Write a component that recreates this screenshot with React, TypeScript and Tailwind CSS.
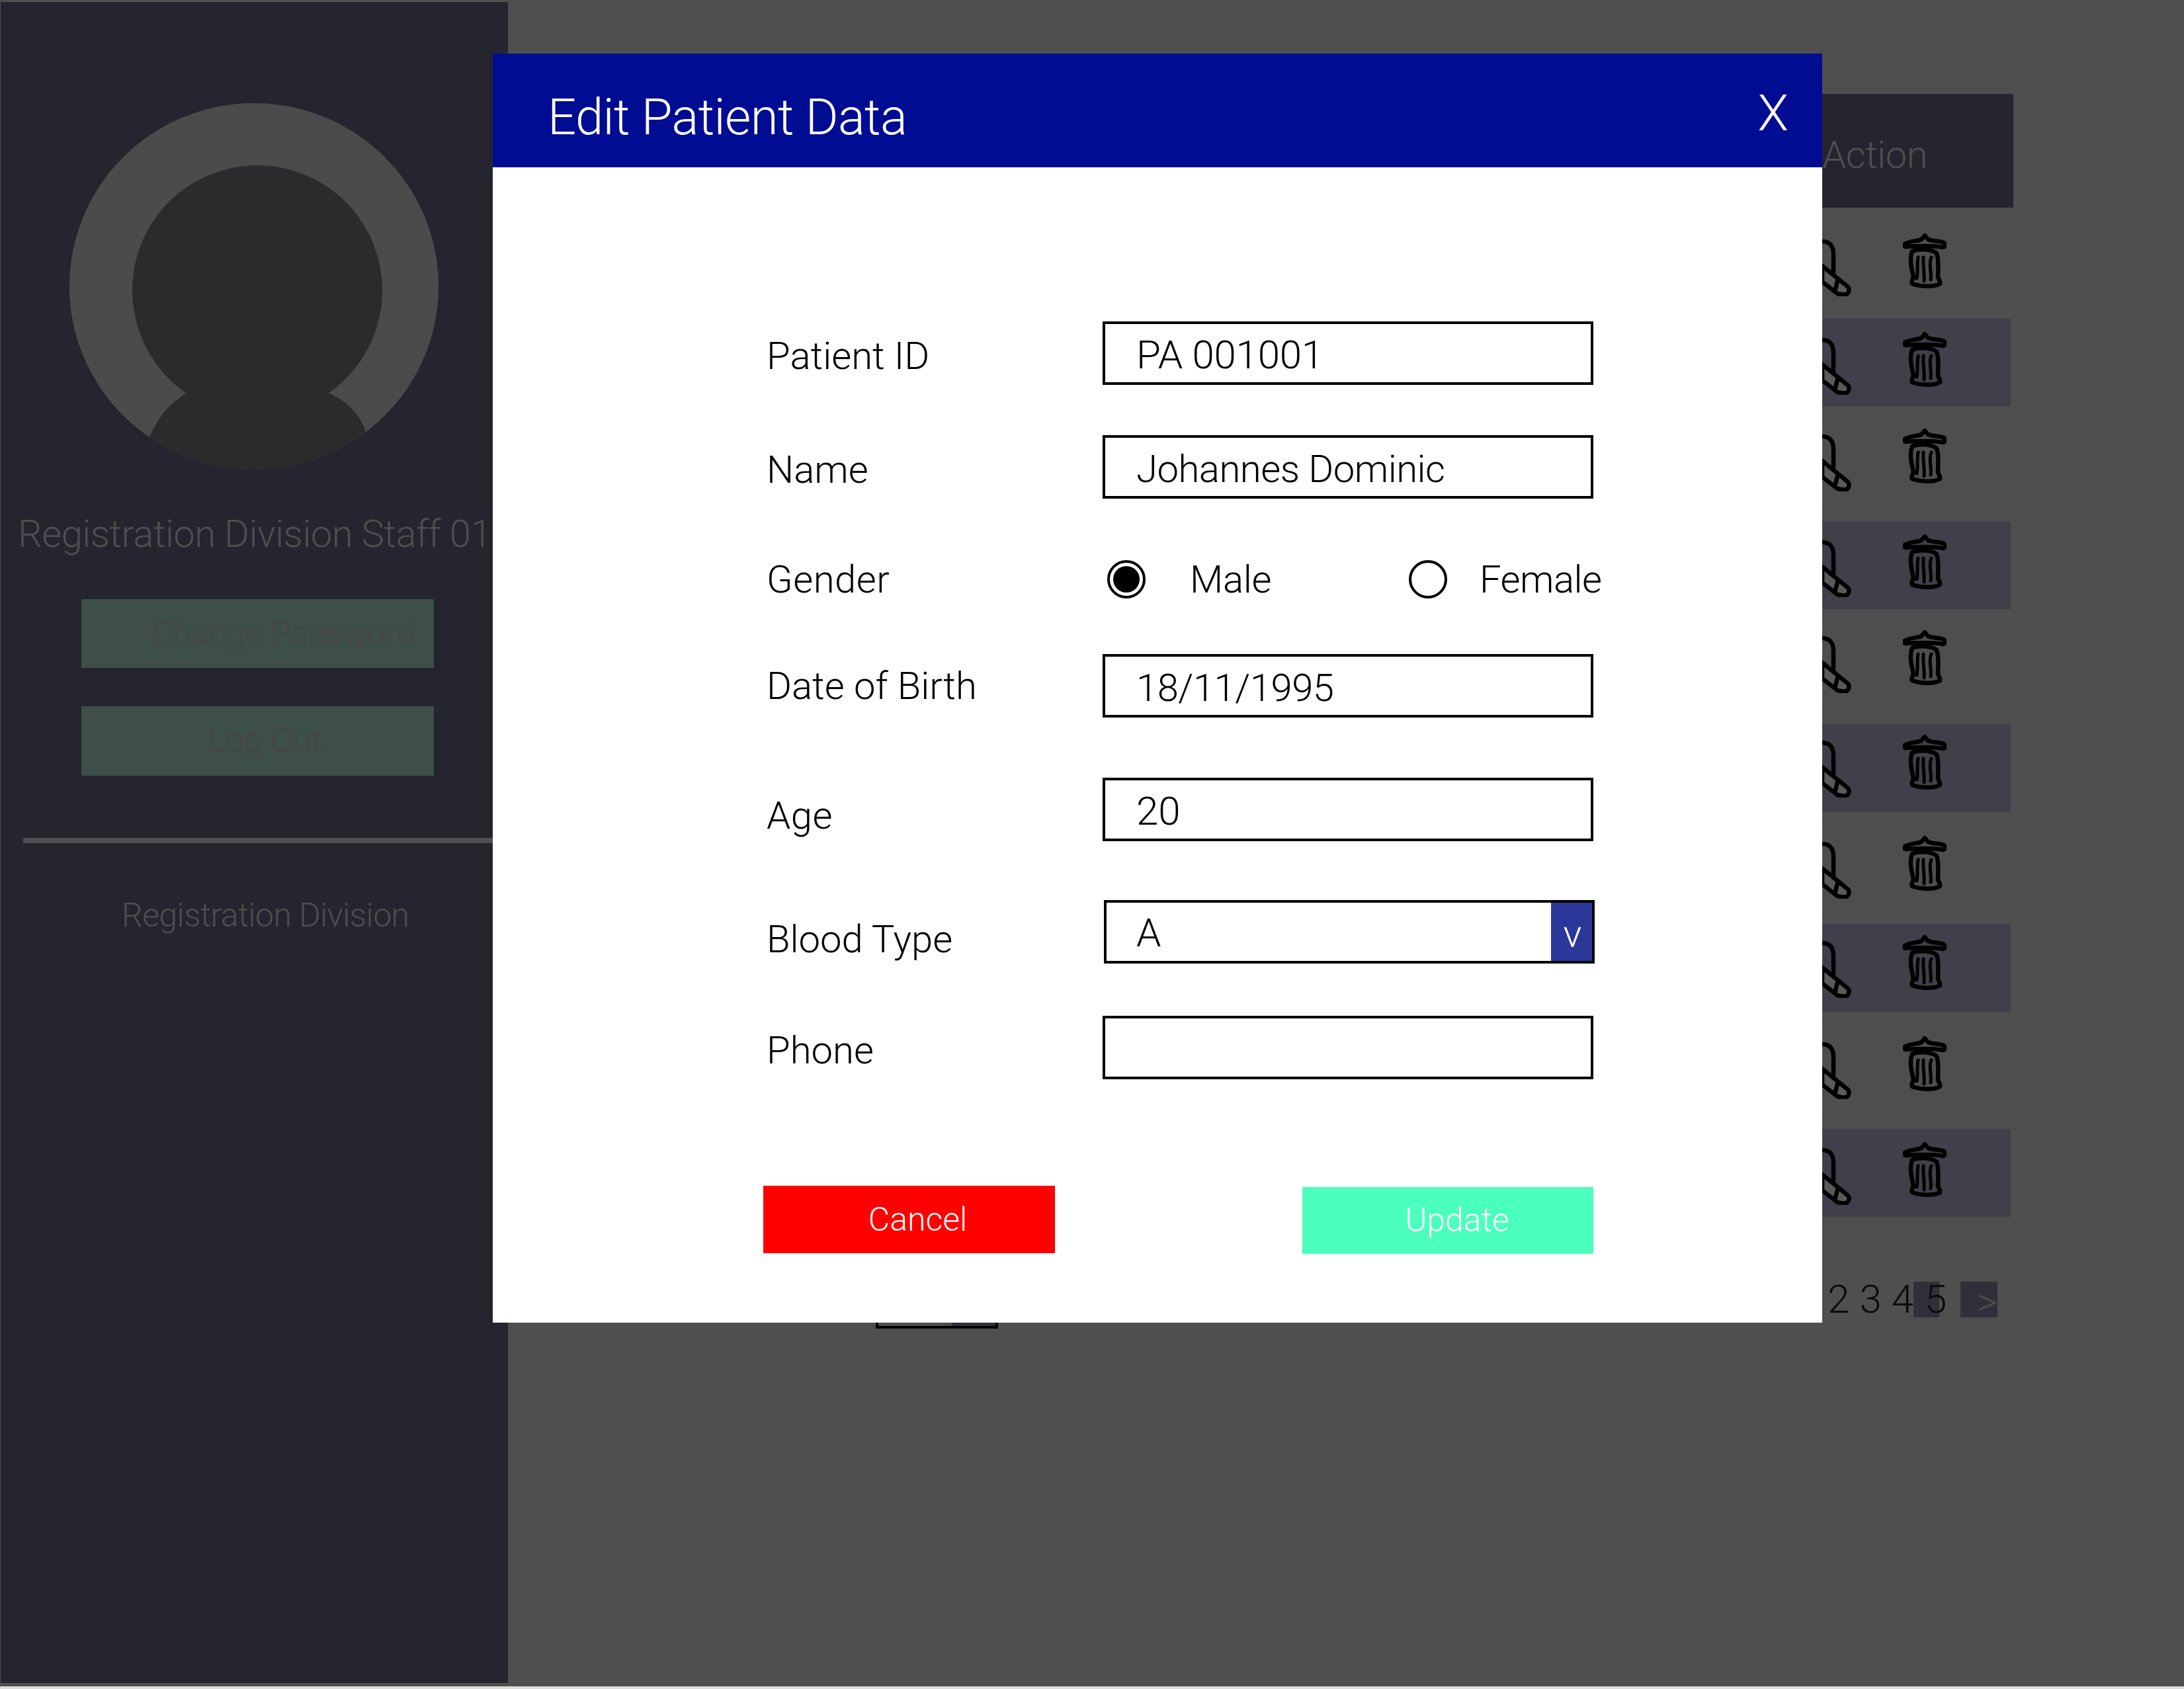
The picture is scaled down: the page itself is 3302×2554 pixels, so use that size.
import { useId } from 'react';

const sans = "font-['Roboto','Liberation_Sans',Arial,sans-serif] font-light";

// background table rows, mostly hidden by the dialog
const rows = [
    { box: 'mt-[16px] h-[130px] pt-[25px]', bg: 'bg-[#4e4e4e]' },
    { box: 'mt-[22px] h-[133px] pt-[22px]', bg: 'bg-[#40404b]' },
    { box: 'mt-[20px] h-[130px] pt-[15px]', bg: 'bg-[#4e4e4e]' },
    { box: 'mt-[23px] h-[133px] pt-[22px]', bg: 'bg-[#40404b]' },
    { box: 'mt-[20px] h-[130px] pt-[14px]', bg: 'bg-[#4e4e4e]' },
    { box: 'mt-[23px] h-[134px] pt-[19px]', bg: 'bg-[#40404b]' },
    { box: 'mt-[19px] h-[130px] pt-[19px]', bg: 'bg-[#4e4e4e]' },
    { box: 'mt-[20px] h-[133px] pt-[19px]', bg: 'bg-[#40404b]' },
    { box: 'mt-[20px] h-[130px] pt-[19px]', bg: 'bg-[#4e4e4e]' },
    { box: 'mt-[27px] h-[133px] pt-[22px]', bg: 'bg-[#40404b]' },
];

function Avatar() {
    const id = useId();
    return (
        <svg width="560" height="554" viewBox="0 0 560 554" className="ml-[104px] mt-[153px] block">
            <defs>
                <clipPath id={id}>
                    <ellipse cx="279" cy="277" rx="279" ry="277" />
                </clipPath>
            </defs>
            <ellipse cx="279" cy="277" rx="279" ry="277" fill="#4b4b4b" />
            <g clipPath={`url(#${id})`} fill="#2a2b2c">
                <circle cx="284" cy="283" r="189" />
                <path d="M181 436 C150 454 134 476 122 503 L100 558 L470 558 L447 495 C438 466 416 450 388 436 Z" />
            </g>
        </svg>
    );
}

function Sidebar() {
    return (
        <aside className="ml-[1px] mt-[3px] h-[2542px] w-[767px] shrink-0 bg-[#252530]">
            <Avatar />
            <p className="mt-[60px] pl-[26px] text-[58px] leading-[74px] tracking-[-0.6px] whitespace-nowrap text-[#4e4e4e]">Registration Division Staff 01</p>
            <div className="ml-[122px] mt-[62px] flex h-[104px] w-[533px] items-center bg-[#3d4f48] pl-[106px] text-[50px] text-[#464549]">Change Password</div>
            <div className="ml-[122px] mt-[58px] flex h-[105px] w-[533px] items-center bg-[#3d4f48] pl-[190px] text-[50px] tracking-[0.5px] text-[#464549]">Log Out</div>
            <div className="ml-[34px] mt-[94px] h-[8px] w-[720px] bg-[#4f4f4f]" />
            <p className="mt-[79px] pl-[183px] text-[50px] leading-[60px] tracking-[-0.6px] whitespace-nowrap text-[#4e4e4e]">Registration Division</p>
        </aside>
    );
}

function TrashIcon() {
    return (
        <svg width="66" height="84" viewBox="0 0 66 84" fill="none" stroke="#000" strokeWidth="6.5" strokeLinecap="round" strokeLinejoin="round" className="mt-[-2px] shrink-0">
            <path d="M3 16 C10 11 22 12 28 9 L33 3 L38 9 C45 12 56 11 62 14 C65 17 64 20 61 21 C45 18 20 19 4 20 C1 19 1 17 3 16 Z" />
            <path d="M14 27 C24 22 44 24 51 30 C55 40 53 56 53 66 C54 70 57 72 56 76 C48 81 28 81 14 76 C12 72 15 70 16 66 C14 56 9 40 14 27 Z" />
            <path d="M23 36 C21 46 23 58 21 68 M31 36 C30 48 33 60 32 72 M43 36 C38 46 44 58 42 70" strokeWidth="5" />
        </svg>
    );
}

function SearchIcon() {
    return (
        <svg width="60" height="90" viewBox="0 0 60 90" fill="none" stroke="#000" strokeWidth="6.5" strokeLinecap="round" strokeLinejoin="round" className="mt-[3px] shrink-0">
            <path d="M0 7 L15 7 C28 7 32 16 32 26 L32 54" />
            <path d="M0 40 L15 44 L53 75 C57 78 56 84 52 87 C48 88 42 87 38 86 L15 68 L0 66 Z" fill="#5a5a5a" />
            <path d="M38 67 L35 79" />
            <path d="M0 46 L15 46 L15 66 L0 66 Z" fill="#000" />
        </svg>
    );
}

function BackgroundPage() {
    return (
        <main className="min-w-0 flex-1 pt-[142px]">
            <div className="ml-auto mr-[258px] w-[700px]">
                <div className="flex h-[172px] items-center bg-[#252530] pl-[411px] text-[58px] tracking-[-0.5px] text-[#4f4f4f]">
                    <span className="mt-[12px]">Action</span>
                </div>
                {rows.map((r, i) => (
                    <div key={i} className={`mr-[4px] flex items-start justify-end gap-[77px] pr-[97px] ${r.box} ${r.bg}`}>
                        <SearchIcon />
                        <TrashIcon />
                    </div>
                ))}
            </div>
            <div className="mt-[98px] flex items-start">
                <div className="ml-[556px] flex h-[71px] w-[185px] border-4 border-black bg-[#4f4f4f]">
                    <div className="ml-auto h-full w-[66px] bg-[#30303a]" />
                </div>
                <div className="ml-auto mr-[282px] flex h-[54px] items-center text-[60px] leading-none text-[#0c0c0c]">
                    <span className="mr-[-15px] tracking-[15px]">234</span>
                    <span className="flex h-[54px] w-[39px] items-center bg-[#30303a] pl-[17px]">5</span>
                    <span className="ml-[32px] flex h-[54px] w-[56px] items-center justify-end bg-[#30303a] pt-[8px] text-[#4f4f4f]">&gt;</span>
                </div>
            </div>
        </main>
    );
}

function Label({ children, className = '' }: { children: string; className?: string }) {
    return <label className={`w-[507px] shrink-0 text-[58px] leading-none text-black ${className}`}>{children}</label>;
}

function TextBox({ value, className = 'text-[58px] tracking-[-0.5px]' }: { value?: string; className?: string }) {
    return (
        <div className={`flex h-[96px] w-[742px] items-center border-4 border-black bg-white pl-[47px] pt-[6px] text-black ${className}`}>{value}</div>
    );
}

function Radio({ checked, className = '' }: { checked?: boolean; className?: string }) {
    return (
        <span className={`flex h-[58px] w-[58px] shrink-0 items-center justify-center rounded-full border-4 border-black ${className}`}>
            {checked && <span className="h-[40px] w-[40px] rounded-full bg-black" />}
        </span>
    );
}

function EditDialog() {
    return (
        <section className="absolute left-[745px] top-[81px] h-[1919px] w-[2010px] bg-white">
            <header className="flex h-[172px] items-center justify-between bg-[#000c92] pl-[83px] pr-[51px] text-white">
                <h1 className="mt-[20px] text-[76px] font-light tracking-[-0.6px]">Edit Patient Data</h1>
                <span className="mt-[8px] text-[76px] font-light">X</span>
            </header>
            <form className="pl-[414px]">
                <div className="mt-[233px] flex items-center">
                    <Label className="mt-[8px]">Patient ID</Label>
                    <div className="ml-[1px]"><TextBox value="PA 001001" className="text-[60px] tracking-[-0.2px]" /></div>
                </div>
                <div className="mt-[76px] flex items-center">
                    <Label className="mt-[8px]">Name</Label>
                    <div className="ml-[1px]"><TextBox value="Johannes Dominic" /></div>
                </div>
                <div className="mt-[93px] flex h-[58px] items-center">
                    <Label className="tracking-[0.5px]">Gender</Label>
                    <Radio checked className="ml-[8px]" />
                    <span className="ml-[67px] w-[331px] text-[58px] tracking-[-0.3px] text-black">Male</span>
                    <Radio />
                    <span className="ml-[49px] text-[58px] tracking-[-0.5px] text-black">Female</span>
                </div>
                <div className="mt-[84px] flex items-center">
                    <Label>Date of Birth</Label>
                    <div className="ml-[1px]"><TextBox value="18/11/1995" /></div>
                </div>
                <div className="mt-[91px] flex items-center">
                    <Label className="mt-[18px] tracking-[0.5px]">Age</Label>
                    <div className="ml-[1px]"><TextBox value="20" className="text-[60px]" /></div>
                </div>
                <div className="mt-[89px] flex items-center">
                    <Label className="mt-[22px]">Blood Type</Label>
                    <div className="ml-[3px] flex h-[96px] w-[742px] items-stretch border-4 border-black bg-white text-[60px] text-black">
                        <span className="flex flex-1 items-center pl-[45px] pt-[4px]">A</span>
                        <span className="flex w-[62px] items-end justify-center bg-[#2b3899] pb-[12px] pl-[3px] text-[58px] leading-none text-white">v</span>
                    </div>
                </div>
                <div className="mt-[79px] flex items-center">
                    <Label className="mt-[8px]">Phone</Label>
                    <div className="ml-[1px]"><TextBox /></div>
                </div>
                <div className="mt-[161px] flex items-start">
                    <button type="button" className="ml-[-5px] h-[102px] w-[441px] bg-[#ff0000] pl-[26px] text-[50px] text-white">Cancel</button>
                    <button type="button" className="ml-[374px] mt-[2px] h-[101px] w-[440px] bg-[#4bffbc] pl-[28px] text-[50px] text-white">Update</button>
                </div>
            </form>
        </section>
    );
}

export default function App() {
    return (
        <div className="h-[2554px] w-[3302px] overflow-hidden bg-[#dddddd]">
            <div className={`relative flex h-[2550px] w-[3302px] overflow-hidden bg-[#4f4f4f] ${sans}`}>
                <Sidebar />
                <BackgroundPage />
                <EditDialog />
            </div>
        </div>
    );
}
